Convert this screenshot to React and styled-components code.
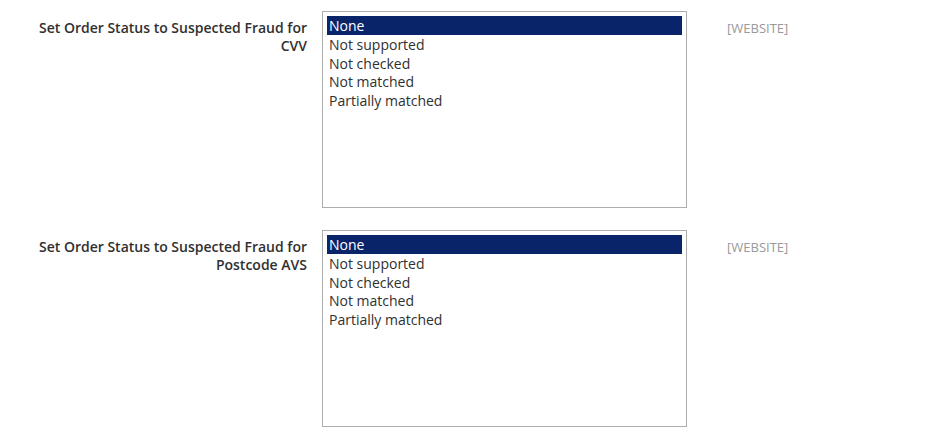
import React from "react";
import styled, { createGlobalStyle } from "styled-components";

const GlobalStyle = createGlobalStyle`
  html, body {
    margin: 0;
    padding: 0;
    background: #fff;
    font-family: "Open Sans", "Liberation Sans", sans-serif;
    color: #303030;
  }
`;

const Page = styled.div`
  width: 947px;
  height: 444px;
  box-sizing: border-box;
  padding: 11px 0 0 27px;
  display: flex;
  flex-direction: column;
  gap: 22px;
  overflow: hidden;
`;

const Row = styled.div`
  display: grid;
  grid-template-columns: 280px 365px auto;
  column-gap: 15px;
  align-items: start;
`;

const Label = styled.label`
  padding-top: 8px;
  text-align: right;
  font-size: 14px;
  font-weight: 600;
  line-height: 18px;
  color: #303030;
`;

const ListBox = styled.div`
  box-sizing: border-box;
  height: 197px;
  border: 1px solid #adadad;
  padding: 4px;
  background: #fff;
  display: flex;
  flex-direction: column;
`;

const Option = styled.div`
  box-sizing: border-box;
  height: 18.75px;
  padding: 1px 0 0 2px;
  line-height: 17.75px;
  font-size: 14px;
  white-space: nowrap;
  background: ${p => (p.selected ? "#0a246a" : "transparent")};
  color: ${p => (p.selected ? "#fff" : "#303030")};
`;

const Scope = styled.div`
  margin-left: 25px;
  padding-top: 8px;
  font-size: 13px;
  line-height: 18px;
  color: #999;
  text-transform: uppercase;
`;

const options = ["None", "Not supported", "Not checked", "Not matched", "Partially matched"];

const fields = [
  { id: "cvv", label: "Set Order Status to Suspected Fraud for CVV" },
  { id: "avs", label: "Set Order Status to Suspected Fraud for Postcode AVS" },
];

export default function App() {
  return (
    <>
      <GlobalStyle />
      <Page>
        {fields.map(f => (
          <Row key={f.id}>
            <Label>{f.label}</Label>
            <ListBox>
              {options.map((o, i) => (
                <Option key={o} selected={i === 0}>{o}</Option>
              ))}
            </ListBox>
            <Scope>[Website]</Scope>
          </Row>
        ))}
      </Page>
    </>
  );
}
